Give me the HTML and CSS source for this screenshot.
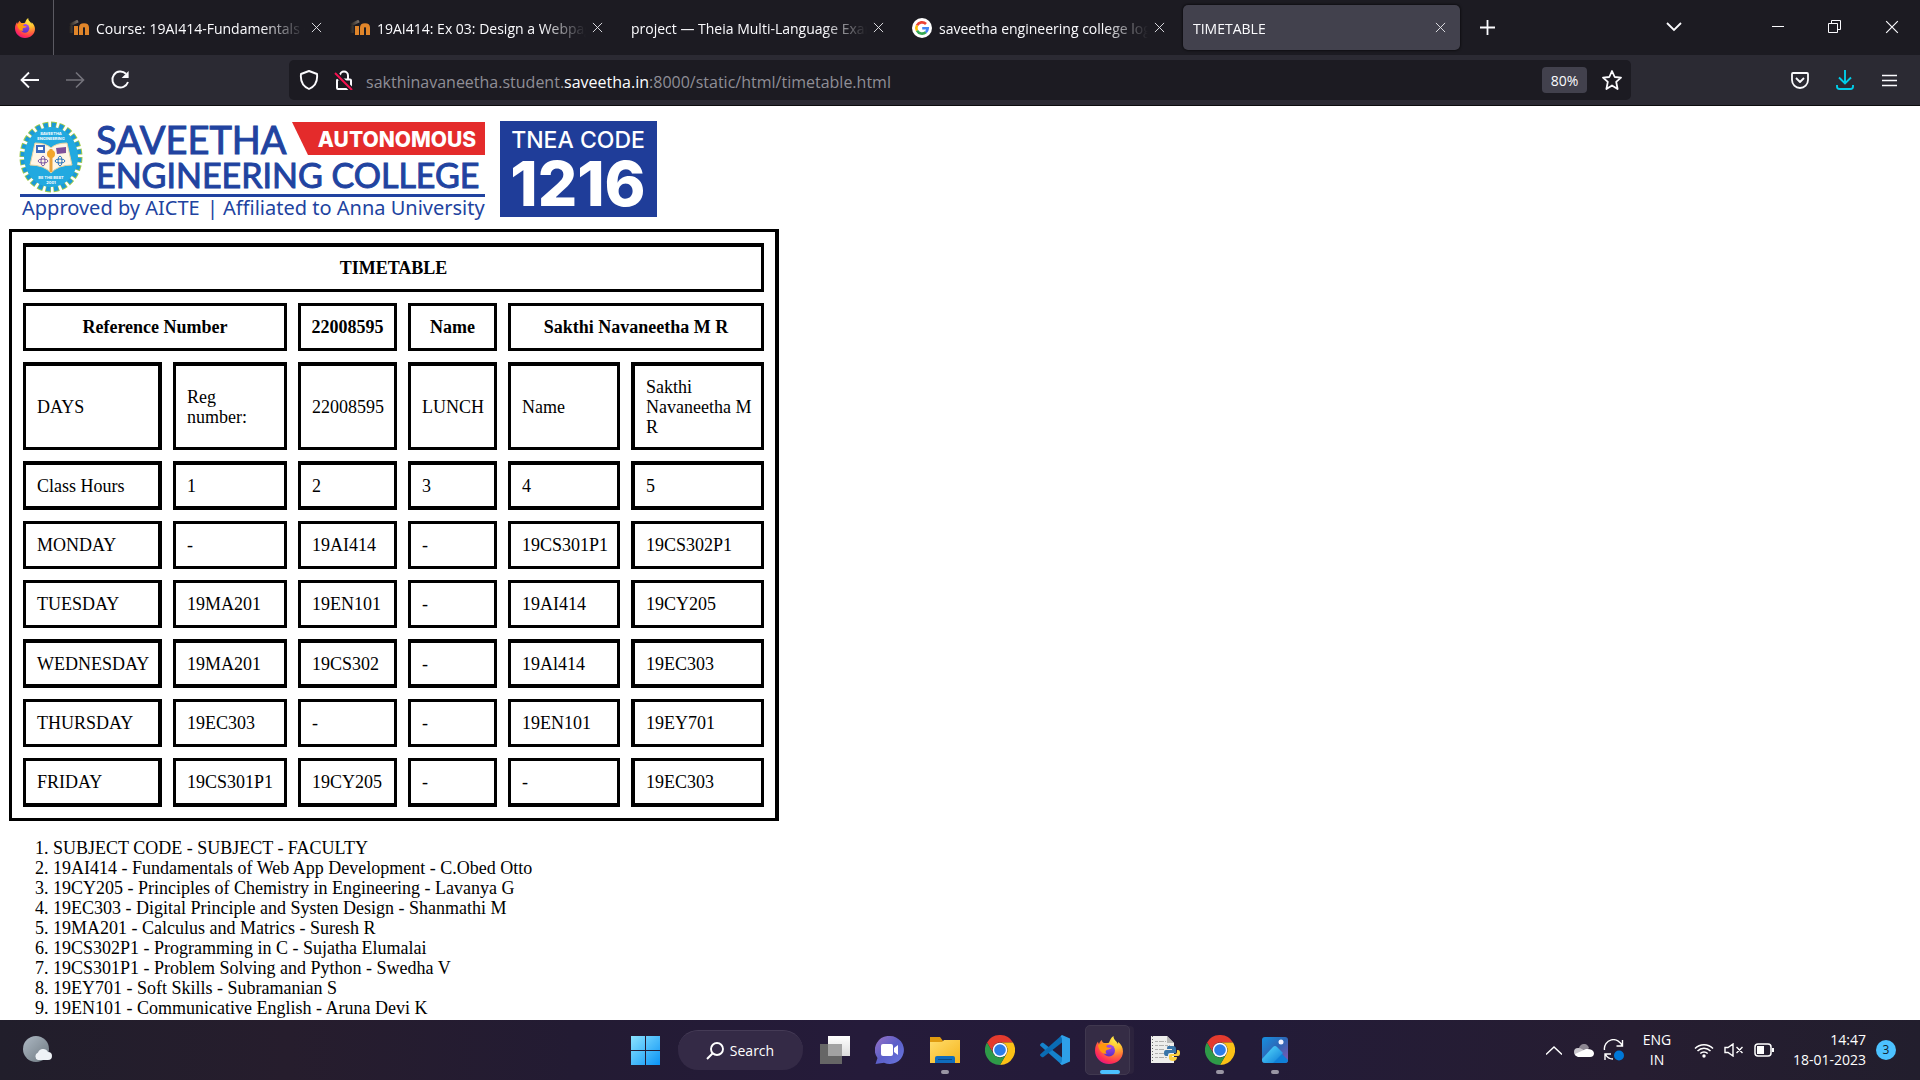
FILE: index.html
```html
<!DOCTYPE html>
<html lang="en">
<head>
<meta charset="utf-8">
<title>TIMETABLE</title>
<link rel="stylesheet" href="styles.css">
</head>
<body>
<svg class="defs" aria-hidden="true">
  <defs>
    <radialGradient id="fox" cx="0.75" cy="0.1" r="1">
      <stop offset="0" stop-color="#fff44f"/><stop offset="0.35" stop-color="#ffbd2e"/>
      <stop offset="0.6" stop-color="#ff7139"/><stop offset="0.85" stop-color="#ff2d55"/><stop offset="1" stop-color="#e31587"/>
    </radialGradient>
    <linearGradient id="globe" x1="0" y1="0" x2="0" y2="1"><stop offset="0" stop-color="#a84bf0"/><stop offset="1" stop-color="#5a2fc4"/></linearGradient>
    <linearGradient id="win" x1="0" y1="0" x2="1" y2="1"><stop offset="0" stop-color="#8be3ff"/><stop offset="1" stop-color="#0a93f5"/></linearGradient>
    <linearGradient id="chat" x1="0" y1="0" x2="1" y2="1"><stop offset="0" stop-color="#9a72c4"/><stop offset="0.5" stop-color="#5b5fc9"/><stop offset="1" stop-color="#6a78e0"/></linearGradient>
    <linearGradient id="folder" x1="0" y1="0" x2="1" y2="1"><stop offset="0" stop-color="#ffdc6b"/><stop offset="1" stop-color="#f5b51d"/></linearGradient>
    <linearGradient id="moon" x1="0" y1="0" x2="1" y2="1"><stop offset="0" stop-color="#aeb9c4"/><stop offset="1" stop-color="#6d7880"/></linearGradient>
    <linearGradient id="photo" x1="0" y1="0" x2="1" y2="1"><stop offset="0" stop-color="#1690e0"/><stop offset="0.5" stop-color="#2e66b5"/><stop offset="1" stop-color="#8a56b0"/></linearGradient>
    <linearGradient id="peak" x1="0" y1="0" x2="1" y2="1"><stop offset="0" stop-color="#5ce0ff"/><stop offset="1" stop-color="#0a78d4"/></linearGradient>
    <linearGradient id="pane" x1="0" y1="0" x2="0" y2="1"><stop offset="0" stop-color="#ffffff"/><stop offset="1" stop-color="#dcdcdc"/></linearGradient>
    <linearGradient id="moodle" x1="0" y1="0" x2="1" y2="0"><stop offset="0" stop-color="#2a2622"/><stop offset="1" stop-color="#7d746c"/></linearGradient>
    <symbol id="i-fox" viewBox="0 0 28 28">
      <path fill="url(#fox)" d="M14 28C6 28 0 22 0 14.500 0 11 1 8 3 5.500c0 1 .3 1.800 1 2.500C4.500 6 5.500 5 7 4c0 1.500.6 2.500 2 3 2 .2 3 .1 5-.2C15 4 16 1.500 18.500 0c0 2.500 1 3.800 2.800 5.500C22 6.200 22.500 7 23 8c.2-.8.200-1.500.1-2.200C26.500 8.500 28 12 28 15.500 28 22.500 22 28 14 28z"/>
      <circle cx="14" cy="14.500" r="6" fill="url(#globe)"/>
      <path fill="#ff980e" d="M3 9c3-1.500 5-1.500 6.500-1 1.500-.7 3-.6 4.500 0-1.500.8-2.500 1.600-2.700 3 1.700.8 3.700.7 5.200.5-.5 1.500-2.500 2-4 2.300-2 .4-2.500 2.400-.8 4C7 18 4 15 3 9z"/>
    </symbol>
    <symbol id="i-moodle" viewBox="0 0 20 16">
      <path fill="none" stroke="url(#moodle)" stroke-width="3" d="M2 13V6M1 5l8-4"/>
      <path fill="none" stroke="#e0852a" stroke-width="4" d="M7 15V6M12 15V7.500c0-3 6-3 6 0V15"/>
    </symbol>
    <symbol id="i-x" viewBox="0 0 12 12"><path d="M1 1l10 10M11 1L1 11"/></symbol>
    <symbol id="i-chrome" viewBox="0 0 30 30">
      <path fill="#e33b2e" d="M2 7.500A15 15 0 0 1 28 7.500H15a7.500 7.500 0 0 0-6.500 11.250z"/><path fill="#fbc116" d="M28 7.500A15 15 0 0 1 15 30l6.500-11.250A7.500 7.500 0 0 0 15 7.500z"/><path fill="#2e9a48" d="M2 7.500A15 15 0 0 0 15 30l6.500-11.250a7.500 7.500 0 0 1-13 0z"/>
      <circle cx="15" cy="15" r="7.300" fill="#fff"/><circle cx="15" cy="15" r="5.800" fill="#2b7de9"/>
    </symbol>
  </defs>
</svg>

<header class="browser">
  <div class="tabstrip">
    <button class="foxview" aria-label="Firefox View"><svg width="20" height="20"><use href="#i-fox"/></svg></button>
    <nav class="tabs" aria-label="Tabs">
      <div class="tab"><svg width="20" height="16"><use href="#i-moodle"/></svg><span class="tab-title">Course: 19AI414-Fundamentals of</span><button class="tab-x" aria-label="Close tab"><svg class="line" width="11" height="11"><use href="#i-x"/></svg></button></div>
      <div class="tab"><svg width="20" height="16"><use href="#i-moodle"/></svg><span class="tab-title">19AI414: Ex 03: Design a Webpage</span><button class="tab-x" aria-label="Close tab"><svg class="line" width="11" height="11"><use href="#i-x"/></svg></button></div>
      <div class="tab"><span class="tab-title">project — Theia Multi-Language Example</span><button class="tab-x" aria-label="Close tab"><svg class="line" width="11" height="11"><use href="#i-x"/></svg></button></div>
      <div class="tab"><svg width="20" height="20" viewBox="0 0 20 20"><circle cx="10" cy="10" r="10" fill="#fff"/><g fill="none" stroke-width="2.600"><path stroke="#ea4335" d="M5 7.300A5.700 5.700 0 0 1 14 6"/><path stroke="#fbbc05" d="M5 12.700a5.700 5.700 0 0 1 0-5.400"/><path stroke="#34a853" d="M5 12.700a5.700 5.700 0 0 0 8.800 1.500"/><path stroke="#4285f4" d="M13.800 14.200a5.700 5.700 0 0 0 1.900-4H10.200"/></g></svg><span class="tab-title">saveetha engineering college logo</span><button class="tab-x" aria-label="Close tab"><svg class="line" width="11" height="11"><use href="#i-x"/></svg></button></div>
      <div class="tab tab-active"><span class="tab-title">TIMETABLE</span><button class="tab-x" aria-label="Close tab"><svg class="line" width="11" height="11"><use href="#i-x"/></svg></button></div>
      <button class="newtab" aria-label="New tab"><svg class="line" width="15" height="15" viewBox="0 0 15 15"><path stroke-width="1.800" d="M7.500 0v15M0 7.500h15"/></svg></button>
    </nav>
    <button class="alltabs" aria-label="List all tabs"><svg class="line" width="16" height="10" viewBox="0 0 16 10"><path stroke-width="1.800" d="M1 1l7 7 7-7"/></svg></button>
    <div class="winctl">
      <button aria-label="Minimize"><svg class="line" width="12" height="12" viewBox="0 0 12 12"><path d="M0 5.500h12"/></svg></button>
      <button aria-label="Restore"><svg class="line" width="13" height="13" viewBox="0 0 13 13"><path d="M.5 3.500h9v9h-9zM3.500 3.500v-3h9v9h-3"/></svg></button>
      <button aria-label="Close"><svg class="line" width="14" height="14"><use href="#i-x"/></svg></button>
    </div>
  </div>
  <div class="toolbar">
    <div class="tools tools-left">
      <button aria-label="Back"><svg class="line" width="20" height="18" viewBox="0 0 20 18"><path stroke-width="1.800" d="M19 9H2M9 1.500L1.500 9 9 16.500"/></svg></button>
      <button class="dim" aria-label="Forward"><svg class="line" width="20" height="18" viewBox="0 0 20 18"><path stroke-width="1.600" d="M1 9h17M11 1.500L18.500 9 11 16.500"/></svg></button>
      <button aria-label="Reload"><svg class="line" width="20" height="20" viewBox="0 0 20 20"><path stroke-width="1.900" d="M18 12a8 8 0 1 1-2-8.200"/><path fill="#fbfbfe" stroke="none" d="M18.600 1v7h-7z"/></svg></button>
    </div>
    <div class="urlbar">
      <svg class="line" width="20" height="20" viewBox="0 0 20 20"><path stroke-width="1.900" stroke-linejoin="round" d="M10 1l8 3c.8 7-1.500 12-8 15C3.500 16 1.200 11 2 4z"/></svg>
      <svg class="line" width="20" height="20" viewBox="0 0 20 20"><path stroke-width="2" d="M6 9V5.500a4 4 0 0 1 8 0V9M4 9.500h12q1 0 1 1V18q0 1-1 1H4q-1 0-1-1v-7.500q0-1 1-1z"/><path stroke="#1c1b22" stroke-width="5" d="M1 3l17 17"/><path stroke="#f5114f" stroke-width="2" d="M1 3l17 17"/></svg>
      <div class="url" role="textbox" aria-label="Address" contenteditable="true" spellcheck="false">sakthinavaneetha.student.<span class="domain">saveetha.in</span>:8000/static/html/timetable.html</div>
      <button class="zoom">80%</button>
      <button class="star" aria-label="Bookmark this page"><svg class="line" width="20" height="20" viewBox="0 0 20 20"><path stroke-width="1.800" stroke-linejoin="round" d="M10 1l2.700 6 6.300.6-4.800 4.300L15.600 19 10 15.400 4.400 19l1.400-7.100L1 7.600 7.300 7z"/></svg></button>
    </div>
    <div class="tools tools-right">
      <button aria-label="Save to Pocket"><svg class="line" width="18" height="17" viewBox="0 0 18 17"><path stroke-width="1.800" stroke-linejoin="round" d="M2 1h14q1 0 1 1v6a8 8 0 0 1-16 0V2q0-1 1-1zM5 6l4 4 4-4"/></svg></button>
      <button class="accent" aria-label="Downloads"><svg class="line" width="18" height="20" viewBox="0 0 18 20"><path stroke-width="1.900" d="M9 0v13M3 7.500l6 6 6-6M1 15v1.500Q1 19 3.500 19h11q2.500 0 2.500-2.500V15"/></svg></button>
      <button aria-label="Menu"><svg class="line" width="15" height="13" viewBox="0 0 15 13"><path stroke-width="1.600" d="M0 1.500h15M0 6.500h15M0 11.500h15"/></svg></button>
    </div>
  </div>
</header>

<main class="page">
  <svg class="logo" width="650" height="115" viewBox="9 114 650 115" role="img" aria-label="Saveetha Engineering College">
    <ellipse cx="51" cy="157" rx="28" ry="32" fill="none" stroke="#a5cc4a" stroke-width="7" stroke-dasharray="54 24" pathLength="1872"/>
    <ellipse cx="51" cy="157" rx="28" ry="32" fill="none" stroke="#1c9ad6" stroke-width="5" stroke-dasharray="42 36" stroke-dashoffset="-6" pathLength="1872"/>
    <ellipse cx="51" cy="157" rx="27" ry="30" fill="#22a9e0"/>
    <path fill="#fff6e6" stroke="#e6d2a0" stroke-width="1" d="M35 143q11 0 16 5 5-5 16-5l5 22q-14 0-21 8-7-8-21-8z"/>
    <path stroke="#e8a33c" stroke-width="3" d="M51 149v23"/><circle cx="51" cy="154" r="4" fill="#f3a62b"/>
    <path fill="#3f6cc0" d="M36 145h9v8h-9z"/><path fill="#fff" d="M38 147h5v3h-5z"/><path fill="#80509a" d="M56 148l10-1v6l-9 1z"/>
    <g fill="none" stroke="#7c57a6"><ellipse cx="43" cy="161" rx="5" ry="2"/><ellipse cx="43" cy="161" rx="2" ry="5"/></g>
    <g fill="none" stroke="#2a74bd"><ellipse cx="60" cy="161" rx="5" ry="2"/><ellipse cx="60" cy="161" rx="2" ry="5"/></g>
    <g class="seal-text"><text x="51" y="135">SAVEETHA</text><text x="51" y="140">ENGINEERING</text><text x="51" y="179">BE THE BEST</text><text x="51" y="184">2001</text></g>
    <text class="name name-top" x="96" y="154">SAVEETHA</text>
    <text class="name name-bottom" x="96" y="188">ENGINEERING COLLEGE</text>
    <path fill="#e42b2b" d="M292 122h193v33H308z"/>
    <text class="ribbon" x="397" y="147">AUTONOMOUS</text>
    <path fill="#2143a0" d="M20 194h465v3H20z"/>
    <text class="tagline" x="22" y="215">Approved by AICTE</text>
    <text class="tagline" x="207" y="215">|</text>
    <text class="tagline" x="223" y="215">Affiliated to Anna University</text>
    <path fill="#1f3d99" d="M500 121h157v96H500z"/>
    <text class="code-label" x="578" y="148">TNEA CODE</text>
    <text class="code" x="578" y="206">1216</text>
  </svg>

  <table class="timetable">
    <colgroup><col class="c1"><col class="c2"><col class="c3"><col class="c4"><col class="c5"><col class="c6"></colgroup>
    <tr class="tall"><th colspan="6">TIMETABLE</th></tr>
    <tr><th colspan="2">Reference Number</th><th>22008595</th><th>Name</th><th colspan="2">Sakthi Navaneetha M R</th></tr>
    <tr class="lines"><td>DAYS</td><td>Reg number:</td><td>22008595</td><td>LUNCH</td><td>Name</td><td>Sakthi Navaneetha M R</td></tr>
    <tr class="tall heavy"><td>Class Hours</td><td>1</td><td>2</td><td>3</td><td>4</td><td>5</td></tr>
    <tr><td>MONDAY</td><td>-</td><td>19AI414</td><td>-</td><td>19CS301P1</td><td>19CS302P1</td></tr>
    <tr><td>TUESDAY</td><td>19MA201</td><td>19EN101</td><td>-</td><td>19AI414</td><td>19CY205</td></tr>
    <tr class="tall heavy"><td>WEDNESDAY</td><td>19MA201</td><td>19CS302</td><td>-</td><td>19Al414</td><td>19EC303</td></tr>
    <tr><td>THURSDAY</td><td>19EC303</td><td>-</td><td>-</td><td>19EN101</td><td>19EY701</td></tr>
    <tr class="last"><td>FRIDAY</td><td>19CS301P1</td><td>19CY205</td><td>-</td><td>-</td><td>19EC303</td></tr>
  </table>

  <ol class="subjects">
    <li>SUBJECT CODE - SUBJECT - FACULTY</li>
    <li>19AI414 - Fundamentals of Web App Development - C.Obed Otto</li>
    <li>19CY205 - Principles of Chemistry in Engineering - Lavanya G</li>
    <li>19EC303 - Digital Principle and Systen Design - Shanmathi M</li>
    <li>19MA201 - Calculus and Matrics - Suresh R</li>
    <li>19CS302P1 - Programming in C - Sujatha Elumalai</li>
    <li>19CS301P1 - Problem Solving and Python - Swedha V</li>
    <li>19EY701 - Soft Skills - Subramanian S</li>
    <li>19EN101 - Communicative English - Aruna Devi K</li>
  </ol>
</main>

<footer class="taskbar">
  <div class="weather"><button aria-label="Weather"><svg width="30" height="28" viewBox="0 0 30 28"><circle cx="13" cy="13" r="13" fill="url(#moon)"/><path fill="#eef2f6" d="M15 24a4 4 0 0 1 0-7.500 5.500 5.500 0 0 1 10-.5 4 4 0 0 1 0 8z"/></svg></button></div>
  <div class="apps">
    <button class="app" aria-label="Start"><svg width="30" height="30" viewBox="0 0 30 30"><path fill="url(#win)" d="M1 1h14v14H1zM16 1h14v14H16zM1 16h14v14H1zM16 16h14v14H16z"/></svg></button>
    <button class="search"><svg class="line" width="18" height="18" viewBox="0 0 18 18"><circle cx="11" cy="7" r="6" stroke-width="1.900"/><path stroke-width="2" d="M6.700 11.300L1 17"/></svg>Search</button>
    <button class="app" aria-label="Task view"><svg width="30" height="28" viewBox="0 0 30 28"><path fill="url(#pane)" d="M8 0h22v20H8z"/><path fill="#666" d="M0 8h22v20H0z"/><path fill="#a2a2a2" d="M8 8h14v12H8z"/></svg></button>
    <button class="app" aria-label="Chat"><svg width="30" height="28" viewBox="0 0 30 28"><path fill="url(#chat)" d="M15 0a14 14 0 1 1-6 26.700L.5 28l2-6A14 14 0 0 1 15 0z"/><rect x="6" y="8" width="12" height="12" rx="2" fill="#fff"/><path fill="#fff" d="M19 12l4-3v10l-4-3z"/></svg></button>
    <button class="app running" aria-label="File Explorer"><svg width="30" height="28" viewBox="0 0 30 28"><path fill="#e09b10" d="M0 1h10l3 4v6H0z"/><path fill="url(#folder)" d="M0 6h12l2-2h16v23H0z"/><path fill="#0f6cbd" d="M5 27v-5q0-2 2-2h16q2 0 2 2v5z"/><path fill="#0a4a85" d="M8 23h14v1H8z"/></svg></button>
    <button class="app" aria-label="Chrome"><svg width="30" height="30"><use href="#i-chrome"/></svg></button>
    <button class="app" aria-label="Visual Studio Code"><svg width="30" height="30" viewBox="0 0 30 30"><path fill="#1583cc" d="M22 22.500L3.200 7.700 2 7.800.3 9.200q-.5.800 0 1.500L22 30z"/><path fill="#0a6cb4" d="M22 7.500L3.200 22.300 2 22.200.3 20.800q-.5-.8 0-1.500L22 0z"/><path fill="#2ea0e8" d="M22 0l8 3.500v23L22 30l-2-1.500q2-.5 2-4v-19Q22 2 20.500 1.500z"/></svg></button>
    <button class="app running active" aria-label="Firefox"><svg width="28" height="30"><use href="#i-fox"/></svg></button>
    <button class="app" aria-label="Python file"><svg width="30" height="30" viewBox="0 0 30 30"><path fill="#eeeeec" d="M1 1h16l7 7v20H1z"/><path fill="#b8b8b6" d="M17 1v7h7z"/><path stroke="#b0b0ae" stroke-dasharray="3 1 5 1" d="M5 6.500h11M5 10.500h15M5 14.500h9M5 18.500h9M5 22.500h12"/><path stroke="#666" stroke-dasharray="1 2" d="M2.500 1v27"/><path fill="#3874a8" d="M18 11h5q3 0 3 3v4h-6q-2 0-2 2v1h-2q-2 0-2-3t2-3h6v-1h-5q0-3 1-3z"/><path fill="#fcd13f" d="M27 15h1q2 0 2 3t-2 3h-6v1h5q0 4-4 4t-4-3v-2q0-2 2-2h4q2 0 2-2z"/></svg></button>
    <button class="app running" aria-label="Chrome profile"><svg width="30" height="30"><use href="#i-chrome"/></svg></button>
    <button class="app running" aria-label="Photos"><svg width="26" height="26" viewBox="0 0 26 26"><rect width="26" height="26" rx="3" fill="url(#photo)"/><path fill="#0f80d8" d="M7 26L15 12l11 11q0 3-3 3z"/><path fill="url(#peak)" d="M0 22L11 10q2-2 4 0l6 6L11 26H3q-3 0-3-3z"/><circle cx="19" cy="5" r="2.500" fill="#f0f2ff"/></svg></button>
  </div>
  <div class="tray">
    <button aria-label="Show hidden icons"><svg class="line" width="16" height="9" viewBox="0 0 16 9"><path stroke-width="1.400" d="M0 8.500L8 1l8 7.500"/></svg></button>
    <button aria-label="OneDrive"><svg width="20" height="13" viewBox="0 0 20 13"><path fill="#8d8792" d="M5 6a5 5 0 0 1 10-2l-4 4z"/><path fill="#c9c6cc" d="M4 12a4 4 0 0 1 0-8q3-.5 8 4z"/><path fill="#fff" d="M3 12.500q-2-1-2-2.500l11-5q7-.5 8 4 0 4-4 4H4z"/></svg></button>
    <button aria-label="Updates"><svg class="line" width="22" height="22" viewBox="0 0 22 22"><path stroke-width="1.400" d="M1.500 11A9 9 0 0 1 19 7M19.500 1v6h-6M2 21v-6h6M2.500 15.500Q5 20 10 20"/><circle cx="16" cy="16.500" r="5" fill="#0078d7" stroke="none"/></svg></button>
    <button class="lang">ENG<br>IN</button>
    <button class="status" aria-label="Network, sound and battery">
      <svg class="line" width="20" height="16" viewBox="0 0 20 16"><path stroke-width="1.500" d="M1 6.500a12.500 12.500 0 0 1 18 0M3.500 9a9 9 0 0 1 13 0M6.300 11.500a5.300 5.300 0 0 1 7.400 0"/><circle cx="10" cy="14" r="1.700" fill="#fff" stroke="none"/></svg>
      <svg class="line" width="20" height="14" viewBox="0 0 20 14"><path stroke-width="1.400" d="M1 4.500h3L9 1v12L4 9.500H1zM12.500 4l6 6M18.500 4l-6 6"/></svg>
      <svg class="line" width="20" height="14" viewBox="0 0 20 14"><rect x="1" y="1" width="16" height="12" rx="3" stroke-width="1.500"/><path fill="#fff" stroke="none" d="M3 3h7v8H3zM18 5h2v4h-2z"/></svg>
    </button>
    <button class="clock">14:47<br>18-01-2023</button>
    <span class="badge">3</span>
  </div>
</footer>
</body>
</html>
```
FILE: styles.css
```css
* { box-sizing: border-box; }
body {
  margin: 0;
  min-height: 100vh;
  display: flex;
  flex-direction: column;
  background: #fff;
  font-family: "Open Sans", "Noto Sans", sans-serif;
  font-size: 14px;
}
button {
  display: flex;
  align-items: center;
  justify-content: center;
  margin: 0;
  padding: 0;
  border: 0;
  background: none;
  color: inherit;
  font: inherit;
}
svg { flex: none; }
.defs { position: absolute; width: 0; height: 0; }
.line { fill: none; stroke: currentColor; stroke-width: 1; }

/* Browser chrome */
.browser { color: #fbfbfe; background: #1c1b22; border-bottom: 1px solid #0c0c0d; }
.tabstrip { display: flex; height: 55px; }
.foxview { width: 54px; padding-right: 4px; border-right: 1px solid #5b5a62; }
.tabs { display: flex; flex: 1; padding: 5px 0 5px 3px; }
.tab {
  display: flex;
  align-items: center;
  gap: 7px;
  flex: 0 1 277px;
  min-width: 0;
  margin: 0 2px;
  padding: 0 13px 0 10px;
  border-radius: 5px;
}
.tab-title {
  flex: 1;
  padding-top: 2px;
  overflow: hidden;
  white-space: nowrap;
  -webkit-mask-image: linear-gradient(to left, transparent 6px, #000 50px);
  mask-image: linear-gradient(to left, transparent 6px, #000 50px);
}
.tab-x { margin-left: -8px; padding: 1px; color: #e8e8ec; }
.tab-active { background: #42414d; box-shadow: 0 0 3px #000; }
.newtab { width: 50px; }
.alltabs { width: 46px; padding-bottom: 2px; }
.winctl { display: flex; padding-left: 52px; padding-bottom: 2px; }
.winctl button { width: 57px; }

.toolbar { display: grid; grid-template-columns: 289px 1fr 289px; height: 50px; padding: 5px 0; background: #2b2a33; }
.tools { display: flex; }
.tools button { width: 45px; }
.tools-left { padding-left: 7px; }
.tools-right { justify-content: flex-end; padding-right: 8px; }
.dim { color: #74737b; }
.accent { color: #00cde8; }
.urlbar { display: flex; align-items: center; gap: 15px; padding: 0 9px 0 10px; border-radius: 5px; background: #1c1b22; }
.url { flex: 1; margin-left: -3px; padding-top: 3px; overflow: hidden; white-space: nowrap; color: #8f8e96; font-size: 16px; outline: none; }
.domain { color: #fbfbfe; }
.zoom { width: 45px; height: 26px; border-radius: 4px; background: #42414d; }

/* Timetable page */
.page { flex: 1 0 0; min-height: 0; overflow: hidden; padding: 8px 9px 0; color: #000; font-family: "Liberation Serif", serif; font-size: 18px; line-height: 20px; }
.logo { display: block; }
.name { fill: #2143a0; stroke: #2143a0; stroke-width: 1; font-family: Lato, sans-serif; }
.name-top { font-size: 38px; }
.name-bottom { font-size: 34px; }
.ribbon { fill: #fff; font: 800 21px Inter, sans-serif; text-anchor: middle; }
.tagline { fill: #2143a0; font: 20px "Noto Sans", sans-serif; }
.code-label { fill: #fff; font: 500 23px Inter, sans-serif; text-anchor: middle; }
.code { fill: #fff; font: 800 62px Inter, sans-serif; text-anchor: middle; }
.seal-text { fill: #fff; font: 700 4px Inter, sans-serif; text-anchor: middle; }

.timetable { width: 770px; table-layout: fixed; border: 3px solid #000; border-right-width: 4px; border-spacing: 11px; }
.c1 { width: 139px; }
.c2 { width: 114px; }
.c3 { width: 99px; }
.c4 { width: 89px; }
.c5 { width: 112px; }
.c6 { width: 133px; }
.timetable th, .timetable td { height: 48px; padding: 0 8px 0 11px; border: 3px solid #000; }
.timetable th { padding: 0 8px; }
.timetable td:first-child { border-right-width: 4px; }
.timetable td:last-child { border-left-width: 4px; }
.timetable .tall th, .timetable .tall td { height: 49px; border-top-width: 4px; }
.timetable .heavy td { border-bottom-width: 4px; }
.timetable .lines td { height: 88px; border-top-width: 4px; }
.timetable .last td { height: 49px; border-bottom-width: 4px; }
.subjects { margin: 17px 0 0; padding-left: 44px; }

/* Taskbar */
.taskbar {
  display: grid;
  grid-template-columns: 1fr auto 1fr;
  height: 60px;
  color: #fff;
  background: linear-gradient(90deg, #211e2b, #261d2d 15%, #231b33 30%, #251b3a 45%, #231b38 65%, #261d31 85%, #221e2d);
}
.weather { display: flex; padding-left: 23px; }
.apps { display: flex; align-items: center; }
.app { position: relative; width: 55px; height: 50px; }
.search { width: 125px; height: 40px; gap: 6px; margin: 0 5px; border-radius: 20px; background: #342a46; border-top: 1px solid #453b56; }
.running::after { content: ""; position: absolute; left: 23px; bottom: 1px; width: 8px; height: 4px; border-radius: 2px; background: #9a96a4; }
.active { width: 45px; margin: 0 8px 0 2px; padding-left: 4px; border: 1px solid #40384f; border-radius: 5px; background: #352c45; box-shadow: 5px 0 0 -1px #2c233d; }
.active::after { left: 14px; bottom: 0; width: 20px; background: #4cc2ff; }
.tray { display: flex; align-items: center; justify-content: flex-end; padding-right: 24px; line-height: 20px; }
.tray > button { width: 30px; height: 40px; }
.tray > .lang { width: 56px; text-align: center; }
.tray > .status { width: 94px; gap: 10px; padding-left: 4px; }
.tray > .clock { width: 87px; justify-content: flex-end; text-align: right; }
.badge { width: 20px; height: 20px; margin-left: 10px; border-radius: 50%; background: #4cc2ff; color: #10202c; font-size: 12px; text-align: center; }
```
